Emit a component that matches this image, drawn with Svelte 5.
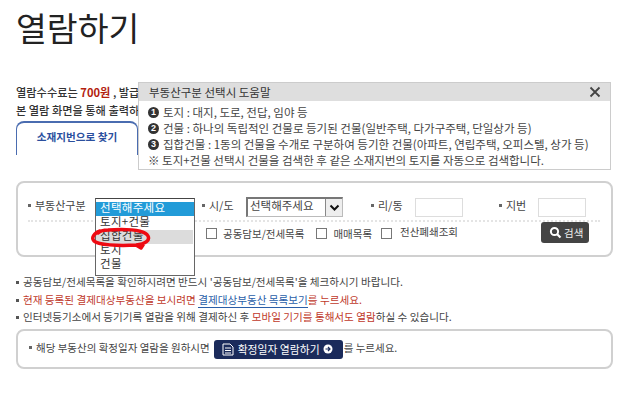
<script>
  const options = ['선택해주세요', '토지+건물', '집합건물', '토지', '건물'];
</script>

<div class="page">
  <h1>열람하기</h1>

  <div class="intro">
    <p>열람수수료는 <b class="red">700원</b> , 발급수수료는 1,000원입니다.</p>
    <p>본 열람 화면을 통해 출력하신 문서는</p>
  </div>

  <div class="tab">소재지번으로 찾기</div>

  <section class="search">
    <div class="row top">
      <span class="lab l1">부동산구분</span>
      <span class="listslot"></span>
      <span class="lab l2">시/도</span>
      <span class="fake-select">선택해주세요<i class="arrow"><svg width="13" height="13" viewBox="0 0 13 13"><path d="M2.500 4.500 6.500 8.500 10.500 4.500" fill="none" stroke="#111" stroke-width="2"/></svg></i></span>
      <span class="lab l3">리/동</span>
      <span class="inp i1"></span>
      <span class="lab l4">지번</span>
      <span class="inp"></span>
    </div>
    <div class="row bottom">
      <label class="chk c1"><i></i>공동담보/전세목록</label>
      <label class="chk c2"><i></i>매매목록</label>
      <label class="chk c3"><i></i><span>전산폐쇄조회</span></label>
      <span class="btn">
        <svg width="13" height="13" viewBox="0 0 13 13"><circle cx="5.500" cy="5.500" r="3.600" fill="none" stroke="#fff" stroke-width="2"/><path d="M8.200 8.200 11.500 11.500" stroke="#fff" stroke-width="2.200"/></svg>검색
      </span>
    </div>

    <div class="listbox">
      {#each options as o, i}
        <div class="opt" class:sel={i === 0} class:hov={i === 2}>{o}</div>
      {/each}
    </div>
    <svg class="scribble" width="62" height="26" viewBox="0 0 62 26">
      <path d="M10 5C4 7 1 12 4 15 8 19 28 20 46 19 56 18 60 14 58 10 54 3 34 3 18 4 14 4 10 5 8 7M46 19 51 22 53 19" fill="none" stroke="#ee0a12" stroke-width="3.500" stroke-linecap="round" stroke-linejoin="round"/>
    </svg>
  </section>

  <ul class="notes">
    <li>공동담보/전세목록을 확인하시려면 반드시 '공동담보/전세목록'을 체크하시기 바랍니다.</li>
    <li class="red">현재 등록된 결제대상부동산을 보시려면&nbsp;<span class="link">결제대상부동산 목록보기</span>를 누르세요.</li>
    <li>인터넷등기소에서 등기기록 열람을 위해 결제하신 후 <span class="red">모바일 기기를 통해서도 열람</span>하실 수 있습니다.</li>
  </ul>

  <section class="confirm">
    <span class="lab">해당 부동산의 확정일자 열람을 원하시면</span>
    <span class="navy">
      <svg width="14" height="13" viewBox="0 0 14 13"><path d="M2 1H9L12 4V12H2Z M4 5H10M4 7.500H10M4 10H10" fill="none" stroke="#fff" stroke-width="1"/></svg>
      <span class="navytext">확정일자 열람하기</span>
      <svg width="10" height="10" viewBox="0 0 10 10"><circle cx="5" cy="5" r="4.500" fill="#fff"/><path d="M2.500 5H7M5 3 7 5 5 7" fill="none" stroke="#1b2b5b" stroke-width="1.200"/></svg>
    </span>
    <span>를 누르세요.</span>
  </section>

  <aside class="help">
    <header><span>부동산구분 선택시 도움말</span>
      <svg width="12" height="12" viewBox="0 0 12 12"><path d="M1.500 1.500 10.500 10.500M10.500 1.500 1.500 10.500" stroke="#444" stroke-width="1.800"/></svg>
    </header>
    <div class="body">
      <p><i class="num">1</i>토지 : 대지, 도로, 전답, 임야 등</p>
      <p><i class="num">2</i>건물 : 하나의 독립적인 건물로 등기된 건물(일반주택, 다가구주택, 단일상가 등)</p>
      <p><i class="num">3</i>집합건물 : 1동의 건물을 수개로 구분하여 등기한 건물(아파트, 연립주택, 오피스텔, 상가 등)</p>
      <p>※ 토지+건물 선택시 건물을 검색한 후 같은 소재지번의 토지를 자동으로 검색합니다.</p>
    </div>
  </aside>
</div>

<style>
  :global(body) { margin: 0; background: #fff; }
  .page {
    position: relative;
    width: 640px;
    height: 404px;
    overflow: hidden;
    box-sizing: border-box;
    padding: 0 28px 0 16px;
    font: 11px/17px "Noto Sans CJK KR", "Liberation Sans", sans-serif;
    color: #444;
  }
  h1 { margin: 8px 0 0; font-size: 33.500px; line-height: 38px; font-weight: 400; color: #222; }
  .intro { margin-top: 37px; height: 38px; color: #333; font-weight: 500; font-size: 11.200px; }
  .intro p { margin: 0; white-space: nowrap; height: 18px; line-height: 18px; }
  .red { color: #c0392b; }
  b.red { color: #b3210f; font-weight: 700; }
  .tab {
    box-sizing: border-box;
    width: 122px;
    height: 34px;
    border: 1px solid #4a6cb0;
    border-bottom: 0;
    border-top-width: 2px;
    border-radius: 8px 8px 0 0;
    padding-top: 5px;
    text-align: center;
    color: #2b4f9e;
    font-weight: 700;
    font-size: 10.600px;
  }
  .search {
    position: relative;
    box-sizing: border-box;
    margin-top: 26px;
    width: 597px;
    height: 76px;
    border: 2px solid #d0d0d0;
    border-radius: 8px;
    padding: 10px 0 0 10px;
  }
  .row { display: flex; align-items: center; }
  .top { height: 24px; border-bottom: 2px dotted #e4e4e4; width: 572px; padding-bottom: 3px; }
  .bottom { height: 22px; font-size: 10.500px; }
  .lab { white-space: nowrap; }
  .lab::before {
    content: "";
    display: inline-block;
    width: 3px;
    height: 3px;
    background: #666;
    margin-right: 4px;
    vertical-align: 3px;
  }
  .listslot { width: 114px; flex: none; }
  .l1 { width: 60px; flex: none; }
  .l2 { width: 44px; flex: none; }
  .fake-select {
    box-sizing: border-box;
    position: relative;
    flex: none;
    width: 97px;
    height: 20px;
    margin-top: 4px;
    border: 1px solid #777;
    border-right-color: #bbb;
    border-bottom-color: #bbb;
    border-left-width: 2px;
    border-top-width: 2px;
    padding-left: 2px;
    line-height: 13px;
    font-size: 11.500px;
  }
  .arrow {
    position: absolute;
    right: 0;
    top: 0;
    bottom: 0;
    width: 16px;
    display: flex;
    align-items: center;
    justify-content: center;
    background: #eee;
    border-left: 1px solid #888;
  }
  .l3 { margin-left: 28px; width: 44px; flex: none; }
  .i1 { margin-right: 36px; }
  .l4 { width: 39px; flex: none; }
  .inp { box-sizing: border-box; flex: none; width: 48px; height: 19px; border: 1px solid #ddd; margin-top: 4px; }
  .chk { display: flex; align-items: center; white-space: nowrap; }
  .chk i { display: block; box-sizing: border-box; width: 11px; height: 11px; border: 1px solid #777; margin-right: 6px; flex: none; }
  .c1 { margin-left: 178px; }
  .c2 { margin-left: 12px; }
  .c3 { margin-left: 9px; }
  .c3 i { margin-right: 8px; }
  .c3 span { margin-top: -3px; }
  .btn {
    box-sizing: border-box;
    display: flex;
    align-items: center;
    gap: 2px;
    margin-left: 83px;
    width: 48px;
    height: 21px;
    padding-left: 8px;
    background: #444;
    border-radius: 3px;
    color: #eee;
    font-weight: 400;
    font-size: 10.500px;
    align-self: flex-start;
  }
  .listbox {
    position: absolute;
    left: 77px;
    top: 15px;
    width: 100px;
    height: 78px;
    padding-top: 3px;
    box-sizing: border-box;
    background: #fff;
    border: 1px solid #666;
    border-top-color: #444;
    overflow: hidden;
    font-size: 11.500px;
    line-height: 11px;
    color: #333;
    letter-spacing: 0.3px;
  }
  .opt { padding: 0 0 0 4px; height: 14px; white-space: nowrap; }
  .opt.sel { background: #229bd8; color: #fff; }
  .opt.hov { background: #dcdcdc; margin-right: 1px; }
  .scribble { position: absolute; left: 72px; top: 43px; }
  .notes { list-style: none; margin: 16px 0 0; padding: 0; font-size: 10.600px; line-height: 17.500px; }
  .notes li { white-space: nowrap; padding-left: 7px; position: relative; }
  .notes li::before { content: ""; position: absolute; left: 0; top: 8px; width: 3px; height: 3px; background: #555; }
  .link { color: #2a5ea8; border-bottom: 1px solid #2a5ea8; }
  .confirm {
    box-sizing: border-box;
    margin-top: 3px;
    width: 597px;
    height: 40px;
    border: 2px solid #d0d0d0;
    border-radius: 8px;
    padding: 8px 0 0 11px;
    display: flex;
    align-items: flex-start;
    white-space: nowrap;
    font-size: 10.500px;
  }
  .navy {
    display: flex;
    align-items: center;
    justify-content: space-between;
    box-sizing: border-box;
    width: 129px;
    height: 19px;
    margin: 1px 1px 0 4px;
    padding: 0 10px 0 7px;
    background: #1b2b5b;
    border-radius: 3px;
    color: #fff;
    font-size: 10.800px;
  }
  .help {
    position: absolute;
    left: 138px;
    top: 82px;
    box-sizing: border-box;
    width: 473px;
    height: 88px;
    background: #fff;
    border: 1px solid #ccc;
    color: #444;
    font-size: 11.500px;
  }
  .help header {
    display: flex;
    justify-content: space-between;
    align-items: center;
    height: 18px;
    background: #dedede;
    padding: 0 9px 0 10px;
    color: #333;
  }
  .help .body { padding: 3px 0 0 9px; }
  .help p { margin: 0; height: 16px; line-height: 16px; white-space: nowrap; display: flex; align-items: center; gap: 4px; }
  .num {
    width: 11px;
    height: 11px;
    border-radius: 50%;
    background: #333;
    color: #fff;
    font: 700 9px/11px "Liberation Sans", sans-serif;
    text-align: center;
  }
</style>
